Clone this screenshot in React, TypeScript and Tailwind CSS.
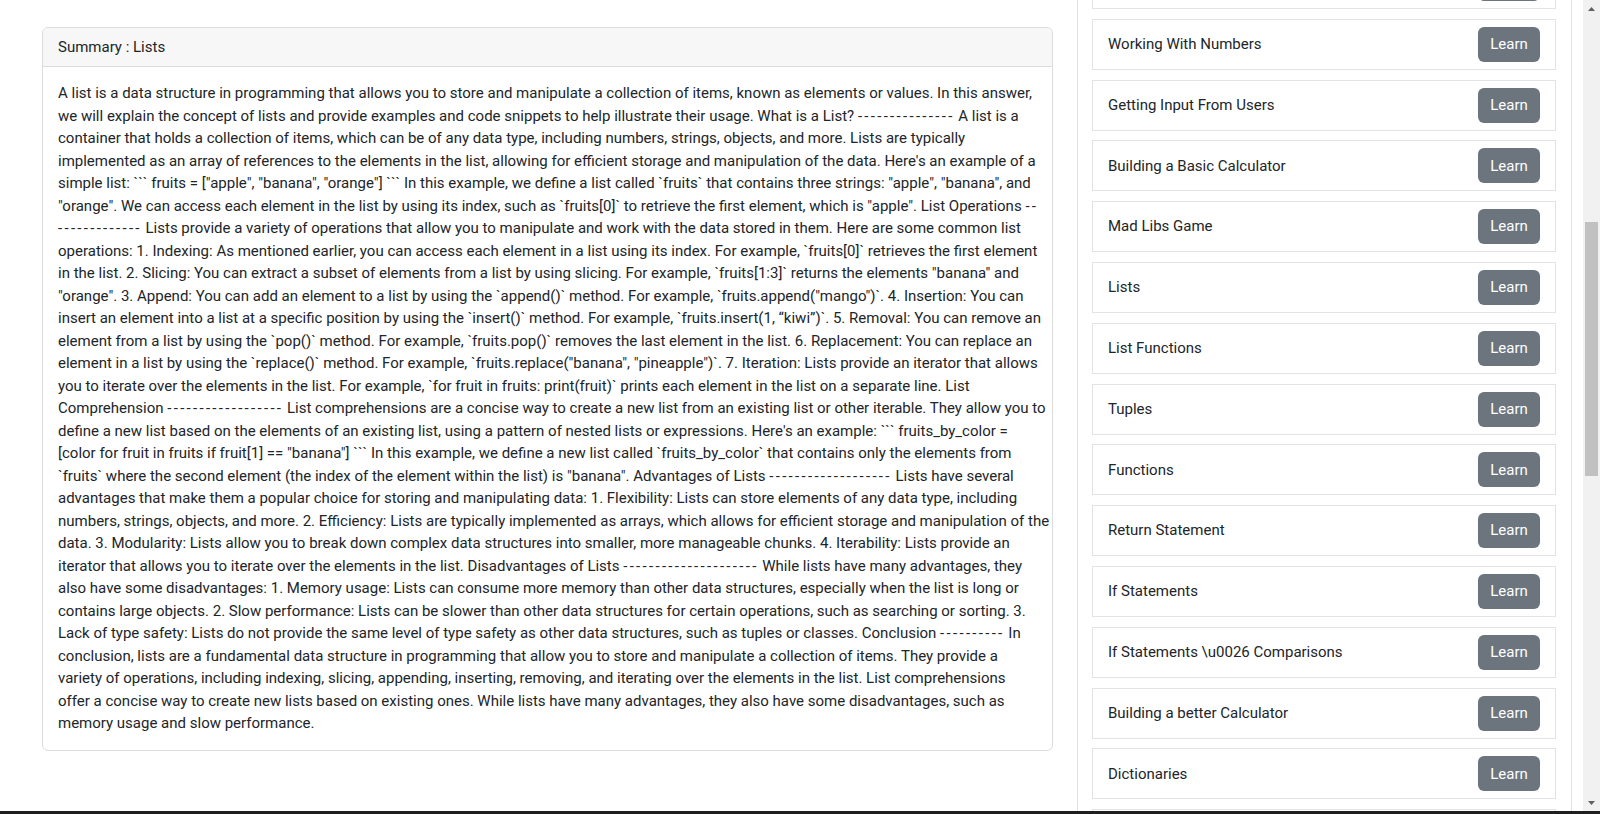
import React from "react";

const summaryLines = [
  "A list is a data structure in programming that allows you to store and manipulate a collection of items, known as elements or values. In this answer,",
  "we will explain the concept of lists and provide examples and code snippets to help illustrate their usage. What is a List? --------------- A list is a",
  "container that holds a collection of items, which can be of any data type, including numbers, strings, objects, and more. Lists are typically",
  "implemented as an array of references to the elements in the list, allowing for efficient storage and manipulation of the data. Here's an example of a",
  'simple list: ``` fruits = ["apple", "banana", "orange"] ``` In this example, we define a list called `fruits` that contains three strings: "apple", "banana", and',
  '"orange". We can access each element in the list by using its index, such as `fruits[0]` to retrieve the first element, which is "apple". List Operations --',
  "------------- Lists provide a variety of operations that allow you to manipulate and work with the data stored in them. Here are some common list",
  "operations: 1. Indexing: As mentioned earlier, you can access each element in a list using its index. For example, `fruits[0]` retrieves the first element",
  'in the list. 2. Slicing: You can extract a subset of elements from a list by using slicing. For example, `fruits[1:3]` returns the elements "banana" and',
  '"orange". 3. Append: You can add an element to a list by using the `append()` method. For example, `fruits.append("mango")`. 4. Insertion: You can',
  "insert an element into a list at a specific position by using the `insert()` method. For example, `fruits.insert(1, \u201ckiwi\u201d)`. 5. Removal: You can remove an",
  "element from a list by using the `pop()` method. For example, `fruits.pop()` removes the last element in the list. 6. Replacement: You can replace an",
  'element in a list by using the `replace()` method. For example, `fruits.replace("banana", "pineapple")`. 7. Iteration: Lists provide an iterator that allows',
  "you to iterate over the elements in the list. For example, `for fruit in fruits: print(fruit)` prints each element in the list on a separate line. List",
  "Comprehension ------------------ List comprehensions are a concise way to create a new list from an existing list or other iterable. They allow you to",
  "define a new list based on the elements of an existing list, using a pattern of nested lists or expressions. Here's an example: ``` fruits_by_color =",
  '[color for fruit in fruits if fruit[1] == "banana"] ``` In this example, we define a new list called `fruits_by_color` that contains only the elements from',
  '`fruits` where the second element (the index of the element within the list) is "banana". Advantages of Lists ------------------- Lists have several',
  "advantages that make them a popular choice for storing and manipulating data: 1. Flexibility: Lists can store elements of any data type, including",
  "numbers, strings, objects, and more. 2. Efficiency: Lists are typically implemented as arrays, which allows for efficient storage and manipulation of the",
  "data. 3. Modularity: Lists allow you to break down complex data structures into smaller, more manageable chunks. 4. Iterability: Lists provide an",
  "iterator that allows you to iterate over the elements in the list. Disadvantages of Lists --------------------- While lists have many advantages, they",
  "also have some disadvantages: 1. Memory usage: Lists can consume more memory than other data structures, especially when the list is long or",
  "contains large objects. 2. Slow performance: Lists can be slower than other data structures for certain operations, such as searching or sorting. 3.",
  "Lack of type safety: Lists do not provide the same level of type safety as other data structures, such as tuples or classes. Conclusion ---------- In",
  "conclusion, lists are a fundamental data structure in programming that allow you to store and manipulate a collection of items. They provide a",
  "variety of operations, including indexing, slicing, appending, inserting, removing, and iterating over the elements in the list. List comprehensions",
  "offer a concise way to create new lists based on existing ones. While lists have many advantages, they also have some disadvantages, such as",
  "memory usage and slow performance.",
];

const lessons = [
  "Working With Strings",
  "Working With Numbers",
  "Getting Input From Users",
  "Building a Basic Calculator",
  "Mad Libs Game",
  "Lists",
  "List Functions",
  "Tuples",
  "Functions",
  "Return Statement",
  "If Statements",
  "If Statements \\u0026 Comparisons",
  "Building a better Calculator",
  "Dictionaries",
  "While Loop",
];

// markdown underlines come through as runs of dashes; space them out a bit
const SummaryLine = ({ text }: { text: string }) => (
  <span className="block whitespace-nowrap">
    {text.split(/(-{2,})/).map((part, i) =>
      /^-{2,}$/.test(part) ? (
        <span key={i} className="tracking-[2.3px]">
          {part}
        </span>
      ) : (
        <React.Fragment key={i}>{part}</React.Fragment>
      )
    )}
  </span>
);

const LessonItem = ({ title }: { title: string }) => (
  <div className="flex h-[51px] shrink-0 items-center justify-between border border-[#e3e3e3] pl-[15px] pr-[15px]">
    <span>{title}</span>
    <button className="flex h-[35px] w-[62px] items-center justify-center rounded-[6px] bg-[#6c757d] text-white">
      Learn
    </button>
  </div>
);

const Scrollbar = () => (
  <div className="ml-[11px] flex w-[17px] flex-col bg-[#f1f1f1]">
    <div className="flex h-[17px] items-center justify-center">
      <svg width="7" height="4" viewBox="0 0 7 4">
        <polygon points="3.5,0 7,4 0,4" fill="#606060" />
      </svg>
    </div>
    <div className="flex-1">
      <div className="mx-[2px] mt-[205px] h-[254px] bg-[#c1c1c1]" />
    </div>
    <div className="flex h-[17px] items-center justify-center">
      <svg width="7" height="4" viewBox="0 0 7 4">
        <polygon points="0,0 7,0 3.5,4" fill="#606060" />
      </svg>
    </div>
  </div>
);

export default function App() {
  return (
    <div className="flex h-screen flex-col overflow-hidden bg-white font-[Roboto,sans-serif] text-[15px] leading-[22.5px] text-[#212529]">
      <div className="flex min-h-0 flex-1">
        <div className="pl-[42px] pt-[27px]">
          <div className="w-[1011px] rounded-[6px] border border-[#dcdcdc]">
            <div className="h-[39px] rounded-t-[6px] border-b border-[#dcdcdc] bg-[#f7f7f7] px-[15px] py-[8px]">
              Summary : Lists
            </div>
            <div className="p-[15px]">
              {summaryLines.map((line, i) => (
                <SummaryLine key={i} text={line} />
              ))}
            </div>
          </div>
        </div>
        <div className="ml-[24px] w-[495px] overflow-hidden border-x border-[#e3e3e3] pl-[14px] pr-[15px]">
          <div className="-mt-[42px] flex flex-col gap-[9.8px]">
            {lessons.map((title) => (
              <LessonItem key={title} title={title} />
            ))}
          </div>
        </div>
        <Scrollbar />
      </div>
      <div className="h-[3px] bg-[#1f1f1f]" />
    </div>
  );
}
